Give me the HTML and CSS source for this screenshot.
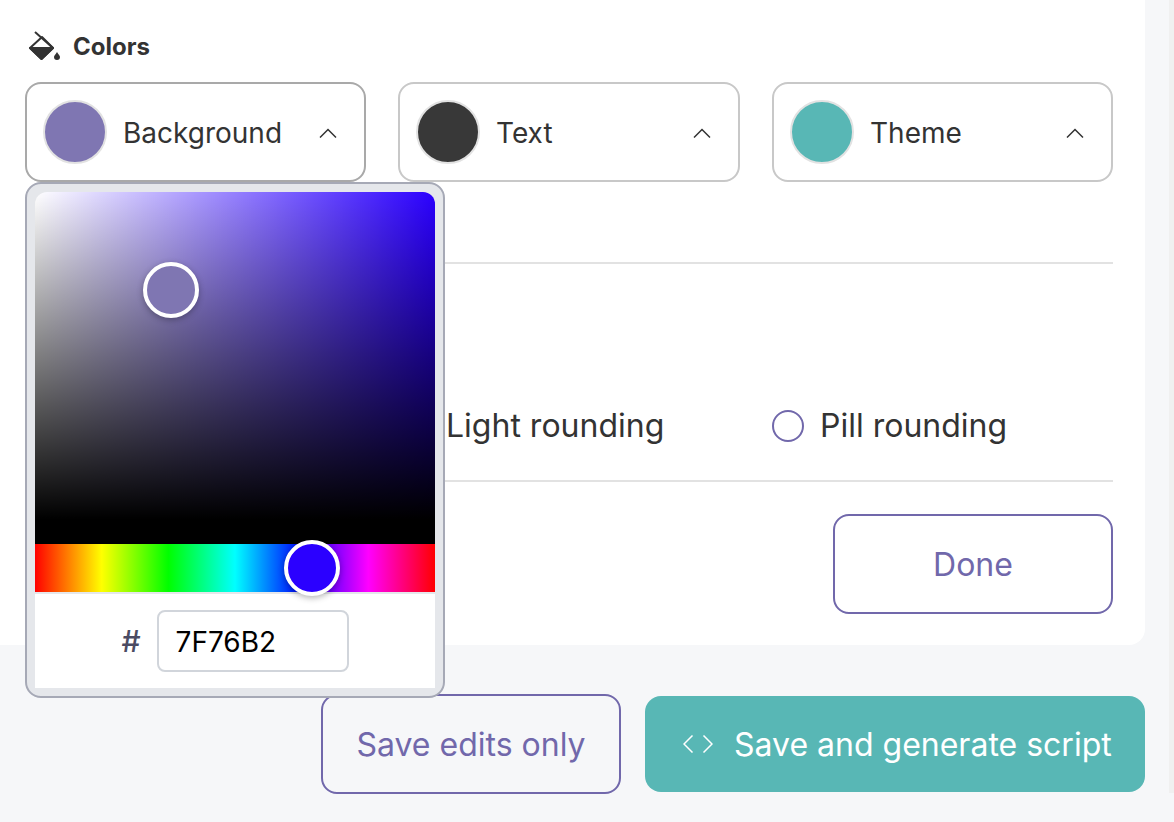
FILE: index.html
```html
<!DOCTYPE html>
<html lang="en">
<head>
    <meta charset="UTF-8">
    <meta name="viewport" content="width=device-width, initial-scale=1.0">
    <title>Colors</title>
    <link rel="stylesheet" href="styles.css">
</head>
<body>
    <div class="page">
        <main class="content">
            <section class="card">
                <h2 class="section-title">
                    <svg class="bucket" width="32" height="32" viewBox="0 0 32 32">
                        <path d="M7 2 L25 18" stroke="#333" stroke-width="2" fill="none"/>
                        <path d="M14 7 L25 18 L13.500 29 L2 18 Z" stroke="#333" stroke-width="2" fill="none" stroke-linejoin="round"/>
                        <path d="M2 18 L25 18 L13.500 29 Z" fill="#333" stroke="#333" stroke-width="2" stroke-linejoin="round"/>
                        <path d="M29 22 C30.500 24.500 32 25.500 32 27 A3 3 0 0 1 26 27 C26 25.500 27.500 24.500 29 22 Z" fill="#333"/>
                    </svg>
                    Colors
                </h2>

                <div class="columns">
                    <div class="picker open">
                        <button class="dropdown">
                            <span class="swatch swatch-bg"></span>
                            <span class="dropdown-label">Background</span>
                            <svg class="chevron" width="18" height="10" viewBox="0 0 18 10"><path d="M1 9.500 L9 1.500 L17 9.500" stroke="#333" stroke-width="1.500" fill="none"/></svg>
                        </button>
                        <div class="popover">
                            <div class="saturation">
                                <span class="thumb sat-thumb"></span>
                            </div>
                            <div class="hue">
                                <span class="thumb hue-thumb"></span>
                            </div>
                            <div class="hex-row">
                                <span class="hash">#</span>
                                <input class="hex-input" type="text" value="7F76B2">
                            </div>
                        </div>
                    </div>
                    <div class="picker">
                        <button class="dropdown">
                            <span class="swatch swatch-text"></span>
                            <span class="dropdown-label">Text</span>
                            <svg class="chevron" width="18" height="10" viewBox="0 0 18 10"><path d="M1 9.500 L9 1.500 L17 9.500" stroke="#333" stroke-width="1.500" fill="none"/></svg>
                        </button>
                    </div>
                    <div class="picker">
                        <button class="dropdown">
                            <span class="swatch swatch-theme"></span>
                            <span class="dropdown-label">Theme</span>
                            <svg class="chevron" width="18" height="10" viewBox="0 0 18 10"><path d="M1 9.500 L9 1.500 L17 9.500" stroke="#333" stroke-width="1.500" fill="none"/></svg>
                        </button>
                    </div>
                </div>

                <hr class="divider first">

                <div class="columns radios">
                    <div></div>
                    <label class="radio"><span class="radio-dot"></span>Light rounding</label>
                    <label class="radio"><span class="radio-dot"></span>Pill rounding</label>
                </div>

                <hr class="divider second">

                <div class="card-footer">
                    <button class="btn btn-outline btn-done">Done</button>
                </div>
            </section>

            <div class="actions">
                <button class="btn btn-outline btn-save">Save edits only</button>
                <button class="btn btn-primary">
                    <svg width="30" height="18" viewBox="0 0 30 18"><path d="M9.500 0.500 L1 9 L9.500 17.500 M20.500 0.500 L29 9 L20.500 17.500" stroke="#fff" stroke-width="1.500" fill="none"/></svg>
                    Save and generate script
                </button>
            </div>
        </main>
        <div class="scrollbar"></div>
    </div>
</body>
</html>
```

FILE: styles.css
```css
* {box-sizing: border-box;}
body {
    margin: 0;
    font-family: Inter, "Liberation Sans", sans-serif;
    background-color: #f6f7f9;
    color: #333;
}
button {font-family: inherit;}
.page {display: flex; align-items: flex-start;}
.content {width: 1169px; padding-right: 24px;}
.scrollbar {width: 5px; height: 793px; background-color: #f0f0f0;}

.card {
    height: 645px;
    padding: 30px 32px 0 25px;
    background-color: #fff;
    border-radius: 0 0 16px 0;
}
.section-title {
    display: flex;
    align-items: center;
    gap: 11px;
    height: 32px;
    margin: 0 0 20px;
    padding: 1px 0 0 3px;
    font-size: 24px;
    font-weight: 700;
    line-height: 32px;
}
.bucket {overflow: visible; flex: none; margin: -1px 2px 0 0;}

.columns {
    display: grid;
    grid-template-columns: 341px 342px 341px;
    gap: 32px;
}
.picker {position: relative;}
.dropdown {
    display: flex;
    align-items: center;
    width: 100%;
    height: 100px;
    padding: 0 27px 0 16px;
    background-color: #fff;
    border: 2px solid #c8c8c8;
    border-radius: 16px;
    color: #333;
    font-size: 28px;
}
.picker.open .dropdown {border-color: #a9a9a9;}
.swatch {
    width: 64px;
    height: 64px;
    border: 2px solid #e2e2e2;
    border-radius: 50%;
    flex: none;
}
.swatch-bg {background-color: #7f76b2;}
.swatch-text {background-color: #383838;}
.swatch-theme {background-color: #58b7b5;}
.dropdown-label {flex: 1; margin: 2px 0 0 16px; text-align: left;}
.chevron {margin-top: 2px;}

.popover {
    position: absolute;
    top: 100px;
    left: 0;
    z-index: 2;
    width: 420px;
    height: 516px;
    padding: 8px;
    background-color: #e5e7eb;
    border: 2px solid #a6a9b6;
    border-radius: 16px;
}
.saturation {
    position: relative;
    height: 352px;
    background:
        linear-gradient(to top, #000 7%, transparent),
        linear-gradient(to right, #fff, transparent),
        #2b00ff;
    border-radius: 12px 12px 0 0;
}
.hue {
    position: relative;
    height: 48px;
    background: linear-gradient(to right, #f00, #ff0, #0f0, #0ff, #00f, #f0f, #f00);
}
.thumb {
    position: absolute;
    width: 56px;
    height: 56px;
    border: 4px solid #fff;
    border-radius: 50%;
    box-shadow: 0 2px 6px rgba(0, 0, 0, 0.3);
}
.sat-thumb {left: 108px; top: 70px; background-color: #7f76b2;}
.hue-thumb {left: 249px; top: -4px; background-color: #2b00ff;}
.hex-row {
    display: flex;
    align-items: center;
    justify-content: center;
    gap: 16px;
    height: 96px;
    background-color: #fff;
    border-top: 2px solid #e5e7eb;
}
.hash {color: #4b4b63; font-size: 30px; font-weight: 500;}
.hex-input {
    width: 192px;
    height: 62px;
    padding: 2px 16px 0 17px;
    border: 2px solid #d1d5db;
    border-radius: 8px;
    color: #000;
    font-family: inherit;
    font-size: 28px;
}

.divider {margin: 0; border: none; border-top: 2px solid #e2e2e2;}
.divider.first {margin-top: 80px;}
.radios {margin-top: 142px; height: 36px; align-items: center;}
.radio {display: flex; align-items: center; gap: 16px; font-size: 32px;}
.radio-dot {
    width: 32px;
    height: 32px;
    border: 2px solid #7168ab;
    border-radius: 50%;
    flex: none;
}
.divider.second {margin-top: 38px;}
.card-footer {display: flex; justify-content: flex-end; margin-top: 32px;}

.btn {
    display: flex;
    align-items: center;
    justify-content: center;
    height: 100px;
    border-radius: 16px;
    font-size: 32px;
}
.btn-outline {
    background-color: transparent;
    border: 2px solid #7168ab;
    color: #7168ab;
}
.btn-done {width: 280px;}
.btn-save {width: 300px;}
.btn-primary {
    justify-content: flex-start;
    gap: 21px;
    width: 500px;
    height: 96px;
    padding: 0 0 0 38px;
    background-color: #58b7b5;
    border: none;
    color: #fff;
}
.actions {
    display: flex;
    justify-content: flex-end;
    align-items: center;
    gap: 24px;
    margin-top: 49px;
}
```
